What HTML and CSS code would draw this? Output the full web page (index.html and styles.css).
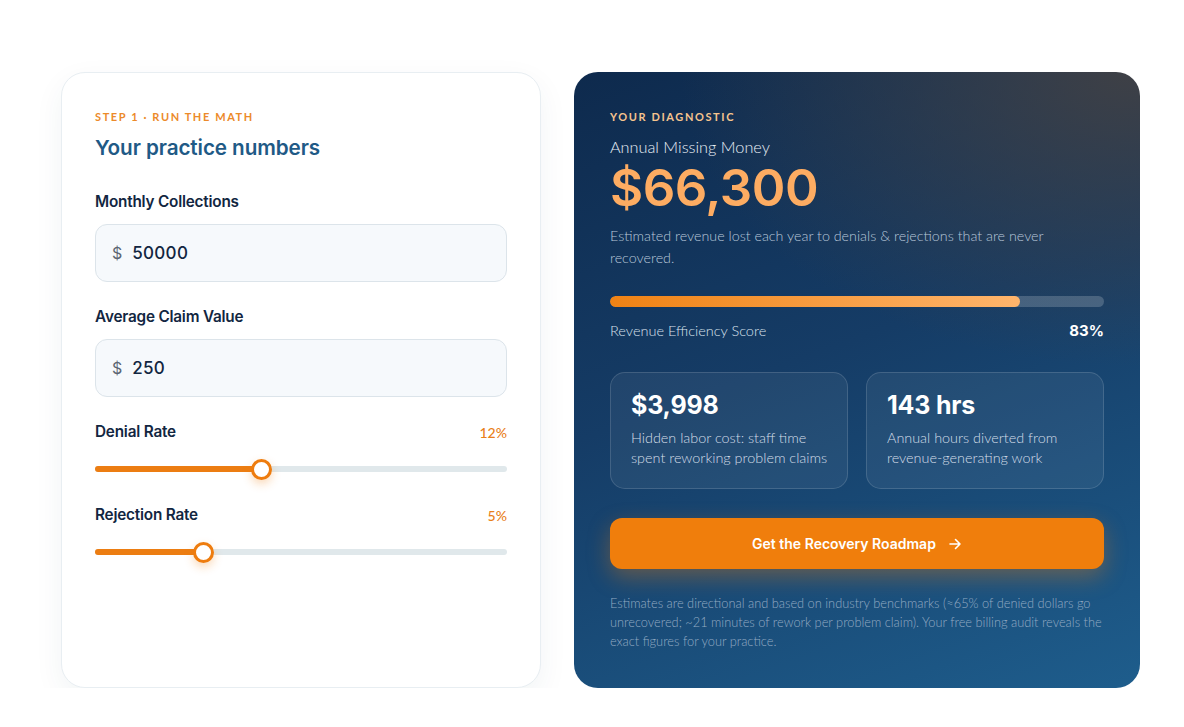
FILE: index.html
```html
<!DOCTYPE html>
<html lang="en">
<head>
<meta charset="utf-8">
<title>Revenue Calculator</title>
<link rel="stylesheet" href="styles.css">
</head>
<body>
<main class="calc">
  <section class="card inputs">
    <div class="eyebrow">STEP 1 · RUN THE MATH</div>
    <h2 class="title">Your practice numbers</h2>

    <div class="field">
      <label class="label">Monthly Collections</label>
      <div class="input"><span class="cur">$</span><span class="val">50000</span></div>
    </div>

    <div class="field">
      <label class="label">Average Claim Value</label>
      <div class="input"><span class="cur">$</span><span class="val">250</span></div>
    </div>

    <div class="field slider-field">
      <div class="label-row"><span class="label">Denial Rate</span><span class="pct">12%</span></div>
      <div class="slider">
        <div class="track"></div>
        <div class="fill" style="width: calc(10.5px + (100% - 21px) * 0.4)"></div>
        <div class="thumb" style="left: calc((100% - 21px) * 0.4)"></div>
      </div>
    </div>

    <div class="field slider-field">
      <div class="label-row"><span class="label">Rejection Rate</span><span class="pct">5%</span></div>
      <div class="slider">
        <div class="track"></div>
        <div class="fill" style="width: calc(10.5px + (100% - 21px) * 0.25)"></div>
        <div class="thumb" style="left: calc((100% - 21px) * 0.25)"></div>
      </div>
    </div>
  </section>

  <section class="card results">
    <div class="eyebrow light">YOUR DIAGNOSTIC</div>
    <div class="sub">Annual Missing Money</div>
    <div class="big">$66,300</div>
    <p class="desc">Estimated revenue lost each year to denials &amp; rejections that are never recovered.</p>

    <div class="score">
      <div class="bar"><div class="bar-fill" style="width: 83%"></div></div>
      <div class="score-row"><span>Revenue Efficiency Score</span><strong>83%</strong></div>
    </div>

    <div class="stats">
      <div class="stat">
        <div class="stat-val">$3,998</div>
        <div class="stat-desc">Hidden labor cost: staff time spent reworking problem claims</div>
      </div>
      <div class="stat">
        <div class="stat-val">143 hrs</div>
        <div class="stat-desc">Annual hours diverted from revenue-generating work</div>
      </div>
    </div>

    <button class="cta">Get the Recovery Roadmap
      <svg class="arrow" width="14" height="14" viewBox="0 0 14 14" fill="none" stroke="currentColor" stroke-width="1.6" stroke-linecap="round" stroke-linejoin="round"><path d="M2 7h10M7.5 2.5L12 7l-4.5 4.5"/></svg>
    </button>

    <p class="note">Estimates are directional and based on industry benchmarks (≈65% of denied dollars go unrecovered; ~21 minutes of rework per problem claim). Your free billing audit reveals the exact figures for your practice.</p>
  </section>
</main>
</body>
</html>
```

FILE: styles.css
```css
* { box-sizing: border-box; }
html, body { margin: 0; padding: 0; background: #ffffff; }
body {
  font-family: "Lato", "Inter", sans-serif;
  color: #0f2540;
}
.calc {
  display: grid;
  grid-template-columns: 480px 566px;
  gap: 33px;
  padding: 72px 0 0 61px;
}
.card {
  border-radius: 24px;
  height: 616px;
}
.inputs {
  background: #fff;
  border: 1px solid #e8eef2;
  box-shadow: 0 10px 30px rgba(20, 60, 90, 0.06);
  padding: 37px 33px 0;
}
.eyebrow {
  font-size: 11px;
  font-weight: 700;
  letter-spacing: 1.6px;
  color: #ec8a2a;
  line-height: 14px;
}
.eyebrow.light { color: #f6c48e; }
.title {
  margin: 11px 0 0;
  font-family: "Inter", sans-serif;
  font-size: 20.7px;
  font-weight: 600;
  color: #1f5a86;
  line-height: 26px;
  letter-spacing: -0.1px;
}
.field { margin-top: 31px; }
.field + .field { margin-top: 25px; }
.label {
  display: block;
  font-family: "Inter", sans-serif;
  font-size: 15.3px;
  font-weight: 600;
  color: #122641;
  line-height: 20px;
  letter-spacing: -0.2px;
}
.input {
  margin-top: 12px;
  height: 58px;
  border: 1px solid #dce4ea;
  border-radius: 12px;
  background: #f6f9fc;
  display: flex;
  align-items: center;
  padding: 0 16px;
  gap: 10px;
}
.cur { font-family: "Inter", sans-serif; font-size: 16px; color: #5b6572; }
.val { font-family: "Inter", sans-serif; font-size: 17px; font-weight: 500; color: #122641; letter-spacing: 0.3px; }
.field.slider-field { margin-top: 25px; }
.field.slider-field + .field.slider-field { margin-top: 25px; }
.label-row { display: flex; justify-content: space-between; align-items: center; }
.pct { font-size: 14px; color: #e9801a; font-weight: 500; }
.slider {
  position: relative;
  height: 21px;
  margin-top: 17px;
}
.track {
  position: absolute; left: 0; right: 0; top: 7px;
  height: 6px; border-radius: 3px; background: #e0e8eb;
}
.fill {
  position: absolute; left: 0; top: 7px;
  height: 6px; border-radius: 3px; background: #ec7d12;
}
.thumb {
  position: absolute; top: 0;
  width: 21px; height: 21px; border-radius: 50%;
  background: #fff; border: 3px solid #ee7c0e;
  box-shadow: 0 4px 10px rgba(240, 130, 20, 0.3);
}

.results {
  position: relative;
  overflow: hidden;
  padding: 38px 36px 0;
  color: #fff;
  background:
    radial-gradient(ellipse 640px 420px at 98% 0%, rgba(66, 65, 68, 0.92), rgba(60, 60, 65, 0) 70%),
    linear-gradient(160deg, #0e2a4d 0%, #153c66 45%, #1e5d8c 100%);
}
.sub {
  margin-top: 13px;
  font-size: 16.3px;
  font-weight: 300;
  color: #e8eef5;
  line-height: 20px;
}
.big {
  margin-top: 3px;
  font-family: "Inter", sans-serif;
  font-size: 51px;
  font-weight: 600;
  color: #fdac62;
  line-height: 56px;
  letter-spacing: -0.5px;
}
.desc {
  margin: 9px 0 0;
  font-size: 14.3px;
  font-weight: 300;
  line-height: 22px;
  color: #b8c7d9;
  max-width: 470px;
}
.score { margin-top: 27px; }
.bar {
  height: 11px; border-radius: 6px;
  background: rgba(255, 255, 255, 0.19);
  overflow: hidden;
}
.bar-fill {
  height: 100%; border-radius: 6px;
  background: linear-gradient(90deg, #ef8214, #ffb56c);
}
.score-row {
  margin-top: 14px;
  display: flex; justify-content: space-between; align-items: center;
  font-size: 14.5px; font-weight: 300; color: #d8e1ec;
}
.score-row strong { font-family: "Inter", sans-serif; font-size: 15px; font-weight: 700; color: #fff; }
.stats {
  margin-top: 32px;
  display: grid;
  grid-template-columns: 1fr 1fr;
  gap: 18px;
}
.stat {
  height: 117px;
  border-radius: 15px;
  border: 1px solid rgba(255, 255, 255, 0.14);
  background: rgba(255, 255, 255, 0.06);
  padding: 17px 10px 0 20px;
}
.stat-val { font-family: "Inter", sans-serif; font-size: 25px; font-weight: 700; line-height: 30px; color: #fff; letter-spacing: -0.2px; }
.stat-desc {
  margin-top: 8px;
  font-size: 14.4px; font-weight: 300; line-height: 20px; color: #d3dde8;
}
.cta {
  margin-top: 29px;
  width: 100%;
  height: 51px;
  border: 0;
  border-radius: 12px;
  background: #f07e0c;
  color: #fff;
  font-family: "Inter", sans-serif;
  font-size: 14px;
  font-weight: 600;
  display: flex; align-items: center; justify-content: center; gap: 12px;
  box-shadow: 0 8px 22px rgba(240, 126, 12, 0.35);
}
.arrow { display: block; }
.note {
  margin: 25px 0 0;
  font-size: 12.8px;
  font-weight: 300;
  line-height: 19px;
  color: #93aac3;
}
```
